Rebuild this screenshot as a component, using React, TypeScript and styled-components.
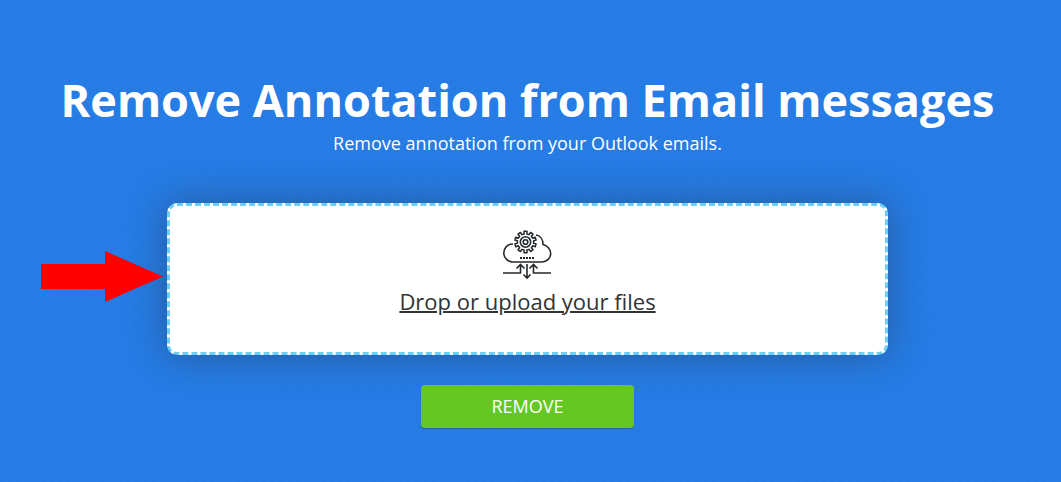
import React from "react";
import styled, { createGlobalStyle } from "styled-components";

const GlobalStyle = createGlobalStyle`
  *, *::before, *::after { box-sizing: border-box; }
  body { margin: 0; background: #267de6; font-family: "Open Sans", sans-serif; }
`;

const Page = styled.main`
  min-height: 100vh;
  display: flex;
  flex-direction: column;
  align-items: center;
  padding: 70px 22px 54px 16px;
  color: #fff;
  background: repeating-linear-gradient(135deg, #267de6 0 4px, #277ae2 4px 6px);
`;

const Title = styled.h1`
  margin: 0;
  font-size: 45px;
  line-height: 60px;
  font-weight: 700;
  text-align: center;
`;

const Subtitle = styled.p`
  margin: 0;
  font-size: 18px;
  line-height: 27px;
  text-align: center;
`;

const Form = styled.form`
  width: 71%;
  max-width: 721px;
  min-width: 290px;
  margin-top: 46px;
  display: flex;
  flex-direction: column;
  align-items: center;
  gap: 30px;
`;

const DropRow = styled.div`
  position: relative;
  width: 100%;
`;

const DropZone = styled.label`
  display: flex;
  flex-direction: column;
  align-items: center;
  gap: 4px;
  padding: 24px 16px 34px;
  border: 3px dashed #6dcff6;
  border-radius: 10px;
  background: #fff;
  color: #333;
  box-shadow: 0 0 40px rgba(37, 40, 43, 0.4);
  cursor: pointer;
`;

const FileInput = styled.input`
  position: absolute;
  width: 1px;
  height: 1px;
  opacity: 0;
`;

const DropText = styled.span`
  font-size: 22px;
  line-height: 34px;
  font-weight: 400;
  text-decoration: underline;
  text-decoration-thickness: 2px;
`;

const Arrow = styled.svg`
  position: absolute;
  right: 100%;
  top: 48px;
  margin-right: 4px;
`;

const RemoveButton = styled.button`
  width: 213px;
  height: 43px;
  padding: 0;
  border: 0;
  border-radius: 4px;
  background: #65c822;
  box-shadow: 0 1px 1px rgba(60, 80, 70, 0.6);
  color: #fff;
  font-family: inherit;
  font-size: 18px;
  line-height: 27px;
  cursor: pointer;
  position: relative;
`;

/* Toothed gear outline centred on (23.5, 12). */
const gearPath = (() => {
  const teeth = 10;
  const points: string[] = [];
  for (let i = 0; i < teeth; i++) {
    [[-0.27, 8.2], [-0.22, 10.8], [0.22, 10.8], [0.27, 8.2]].forEach(([offset, radius]) => {
      const angle = ((i + offset) * 2 * Math.PI) / teeth;
      points.push(`${(23.5 + radius * Math.sin(angle)).toFixed(2)} ${(12 - radius * Math.cos(angle)).toFixed(2)}`);
    });
  }
  return `M${points.join("L")}Z`;
})();

function CloudIcon() {
  return (
    <svg width="49" height="50" viewBox="1 0 49 50" fill="none" stroke="#25282b" strokeWidth="1.6" aria-hidden="true">
      <path d="M11 14C5.500 14 1.800 18 1.800 23S6 32 11 32H40C45 32 48.700 28 48.700 23.500C48.700 19 45 15.500 41 14.500C41 9 38 5.500 34 5" />
      <path d={gearPath} strokeLinejoin="round" strokeWidth="1.500" />
      <circle cx="23.500" cy="12" r="5.200" />
      <circle cx="23.500" cy="12" r="2.300" />
      <path d="M18 28h14" strokeWidth="2" strokeDasharray="2 1" />
      <path d="M1 43H18.500V35M14.500 38.500L18.500 34.500L22.500 38.500" />
      <path d="M49 43H31.500V35M27.500 38.500L31.500 34.500L35.500 38.500" />
      <path d="M25 34V48M21.500 44.500L25 48L28.500 44.500" />
    </svg>
  );
}

export default function App() {
  return (
    <>
      <GlobalStyle />
      <Page>
        <Title>Remove Annotation from Email messages</Title>
        <Subtitle>Remove annotation from your Outlook emails.</Subtitle>
        <Form onSubmit={(event) => event.preventDefault()}>
          <DropRow>
            <DropZone htmlFor="files">
              <CloudIcon />
              <DropText>Drop or upload your files</DropText>
            </DropZone>
            <FileInput id="files" type="file" multiple />
            <Arrow width="122" height="51" viewBox="0 0 122 51" fill="#f00" aria-hidden="true">
              <path d="M0 13H64V0L122 25.500L64 51V38H0Z" />
            </Arrow>
          </DropRow>
          <RemoveButton type="submit">REMOVE</RemoveButton>
        </Form>
      </Page>
    </>
  );
}
